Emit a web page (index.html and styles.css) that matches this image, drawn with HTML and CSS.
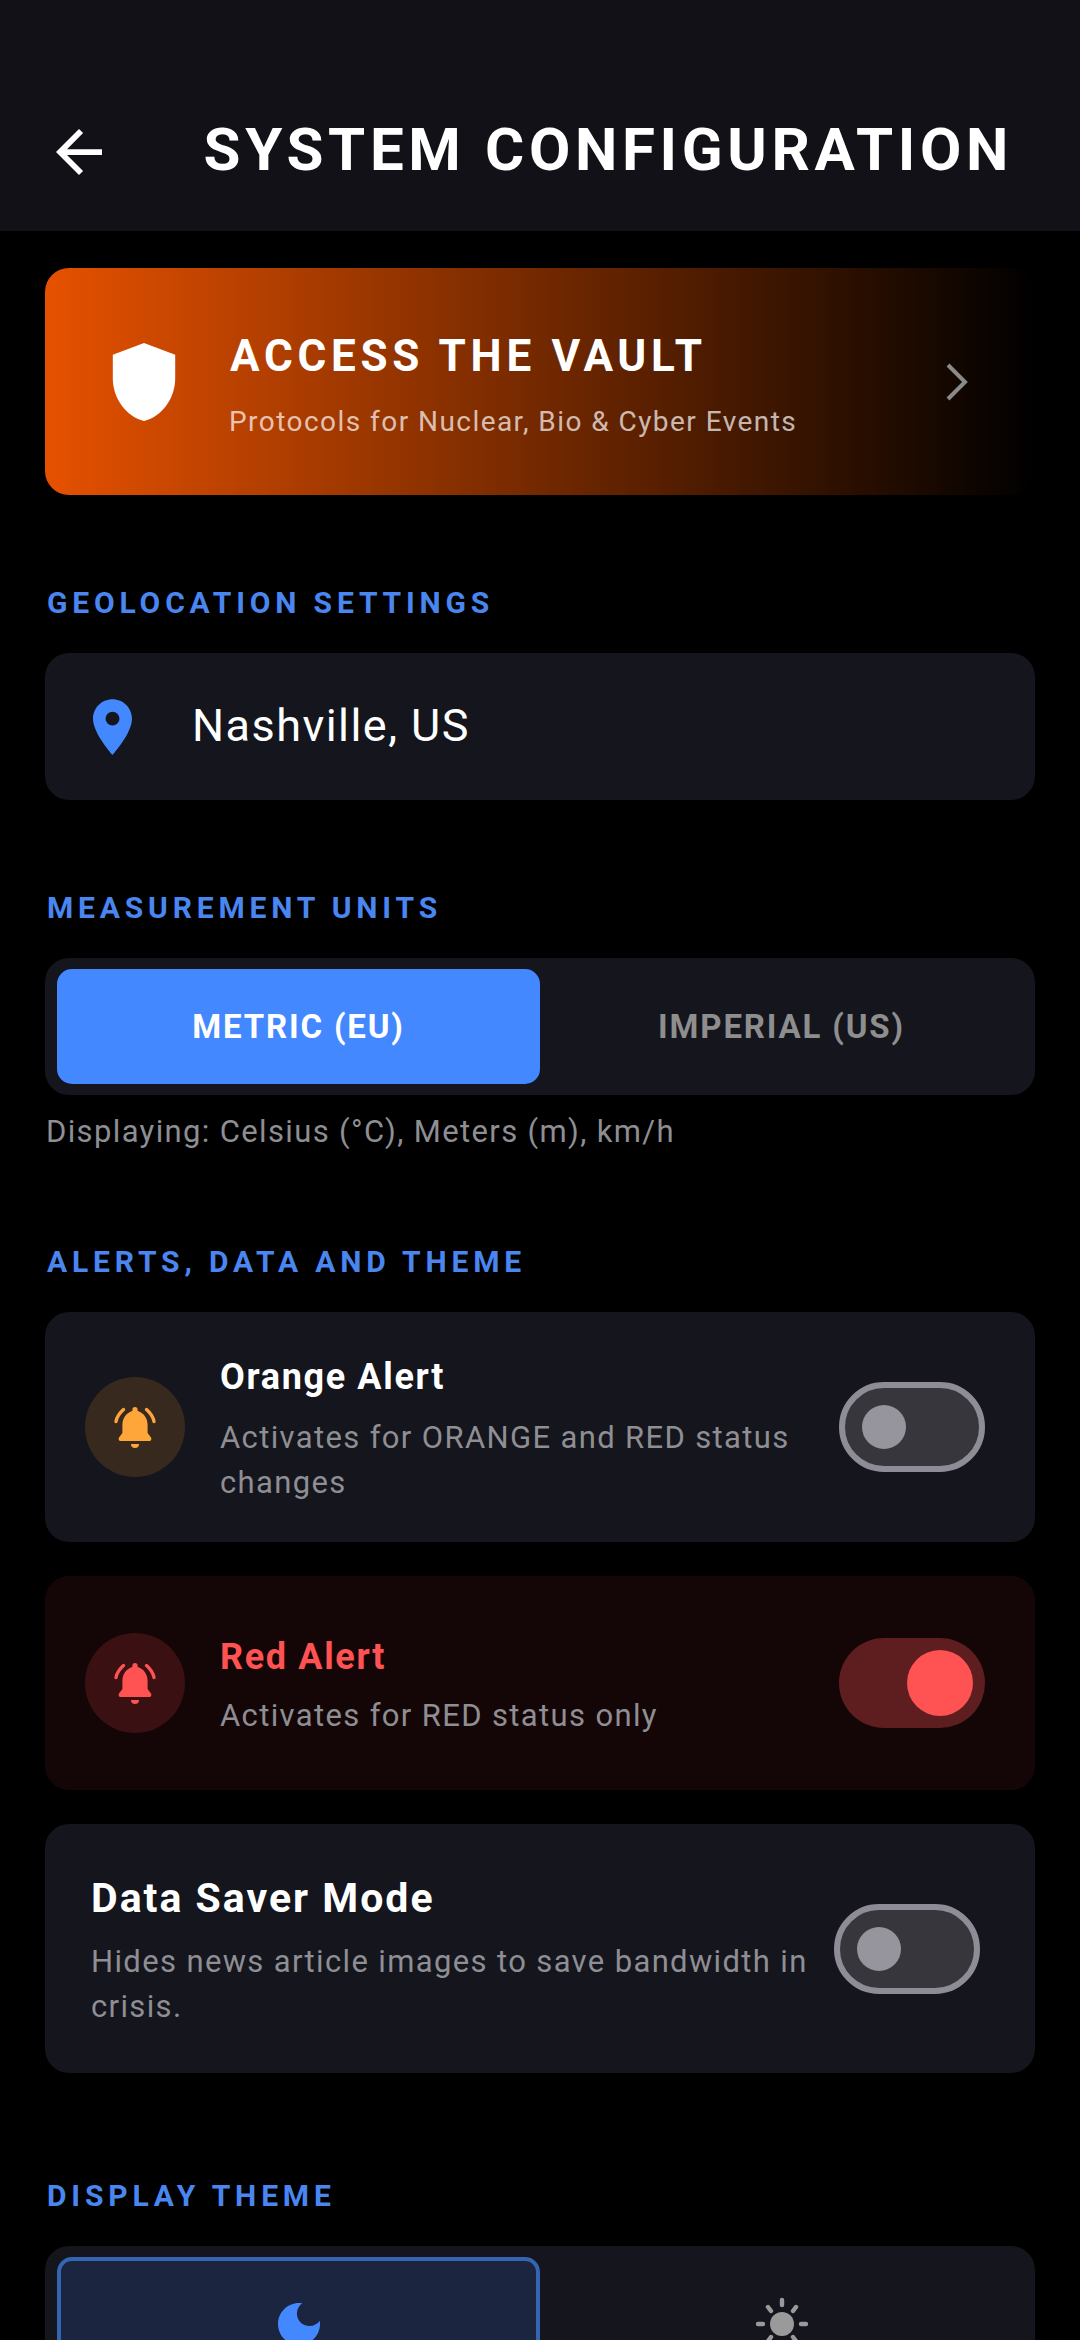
FILE: index.html
```html
<!DOCTYPE html>
<html lang="en">
<head>
  <meta charset="UTF-8">
  <title>System Configuration</title>
  <link rel="stylesheet" href="styles.css">
</head>
<body>

<header class="top-bar">
  <svg class="back-icon" viewBox="4 4 16 16"><path d="M20 11H7.83l5.59-5.59L12 4l-8 8 8 8 1.41-1.41L7.83 13H20v-2z"/></svg>
  <h1>SYSTEM CONFIGURATION</h1>
</header>

<main class="content">

  <a class="vault">
    <svg class="shield-icon" viewBox="4 2 16 20"><path d="M12 2 4 5v6.09c0 5.05 3.41 9.76 8 10.91 4.59-1.15 8-5.86 8-10.91V5l-8-3z"/></svg>
    <div class="vault-text">
      <div class="vault-title">ACCESS THE VAULT</div>
      <div class="vault-sub">Protocols for Nuclear, Bio &amp; Cyber Events</div>
    </div>
    <svg class="chevron-icon" viewBox="0 0 22 38"><path d="M2 2l17 17L2 36"/></svg>
  </a>

  <section class="section">
    <h2>GEOLOCATION SETTINGS</h2>
    <div class="card location">
      <svg class="pin-icon" viewBox="5 2 14 20"><path d="M12 2C8.13 2 5 5.13 5 9c0 5.25 7 13 7 13s7-7.75 7-13c0-3.87-3.13-7-7-7zm0 9.5a2.5 2.5 0 0 1 0-5 2.5 2.5 0 0 1 0 5z"/></svg>
      <span>Nashville, US</span>
    </div>
  </section>

  <section class="section">
    <h2>MEASUREMENT UNITS</h2>
    <div class="segment">
      <div class="seg-btn active">METRIC (EU)</div>
      <div class="seg-btn">IMPERIAL (US)</div>
    </div>
    <p class="helper">Displaying: Celsius (°C), Meters (m), km/h</p>
  </section>

  <section class="section section-alerts">
    <h2>ALERTS, DATA AND THEME</h2>

    <div class="card row row-orange">
      <div class="bell-wrap">
        <svg class="bell-icon" viewBox="0 0 42 43"><use href="#bell"/></svg>
      </div>
      <div class="row-text">
        <div class="row-title">Orange Alert</div>
        <div class="row-desc">Activates for ORANGE and RED status changes</div>
      </div>
      <div class="toggle"><span class="knob"></span></div>
    </div>

    <div class="card row row-red">
      <div class="bell-wrap">
        <svg class="bell-icon" viewBox="0 0 42 43"><use href="#bell"/></svg>
      </div>
      <div class="row-text">
        <div class="row-title">Red Alert</div>
        <div class="row-desc">Activates for RED status only</div>
      </div>
      <div class="toggle on"><span class="knob"></span></div>
    </div>

    <div class="card row row-saver">
      <div class="row-text">
        <div class="row-title">Data Saver Mode</div>
        <div class="row-desc">Hides news article images to save bandwidth in crisis.</div>
      </div>
      <div class="toggle"><span class="knob"></span></div>
    </div>
  </section>

  <section class="section section-theme">
    <h2>DISPLAY THEME</h2>
    <div class="segment theme">
      <div class="theme-btn active">
        <svg class="theme-icon" viewBox="0 0 24 24"><path d="M12 3c-4.97 0-9 4.03-9 9s4.03 9 9 9 9-4.03 9-9c0-.46-.04-.92-.1-1.36-.98 1.37-2.58 2.26-4.4 2.26-2.98 0-5.4-2.42-5.4-5.4 0-1.81.89-3.42 2.26-4.4-.44-.06-.9-.1-1.36-.1z"/></svg>
      </div>
      <div class="theme-btn">
        <svg class="theme-icon sun" viewBox="0 0 56 56">
          <circle cx="28" cy="28" r="12"/>
          <path d="M28 4v5M28 47v5M4 28h5M47 28h5M39 15l3-4M17 15l-3-4M39 41l3 4M17 41l-3 4"/>
        </svg>
      </div>
    </div>
  </section>

</main>

<!-- shared bell shape -->
<svg class="defs" width="0" height="0">
  <symbol id="bell" viewBox="0 0 42 43">
    <path d="M21 1a2.6 2.6 0 0 1 2.6 2.6V5c5.9 1.6 10 7 10 14v8l3.4 4.4c.9 1.3.2 3.6-1.5 3.6h-29c-1.7 0-2.4-2.3-1.5-3.6L8.4 27v-8c0-7 4.1-12.4 10-14V3.6A2.6 2.6 0 0 1 21 1z"/>
    <path d="M17 38h8a4 4 0 0 1-8 0z"/>
    <path class="bell-arc" d="M9.5 3.5C5.5 7 2.8 11 2 15.5M32.5 3.5c4 3.5 6.7 7.5 7.5 12"/>
  </symbol>
</svg>

</body>
</html>
```

FILE: styles.css
```css
html, body {
  margin: 0;
  height: 2340px;
  overflow: hidden;
  background-color: #000;
}
body {
  font-family: Roboto, "Noto Sans", sans-serif;
  color: #fff;
}
h1, h2, p {
  margin: 0;
}
svg {
  display: block;
  flex: none;
}
.defs {
  position: absolute;
}

.top-bar {
  height: 231px;
  box-sizing: border-box;
  padding: 0 67px 46px 56px;
  background-color: #111117;
  display: flex;
  align-items: flex-end;
  justify-content: space-between;
}
.top-bar h1 {
  font-size: 60px;
  line-height: 70px;
  font-weight: 700;
  letter-spacing: 4.65px;
  white-space: nowrap;
}
.back-icon {
  width: 46px;
  height: 46px;
  fill: #fff;
  margin-bottom: 10px;
}

.content {
  padding: 37px 45px 0;
}

.vault {
  height: 227px;
  box-sizing: border-box;
  border-radius: 24px;
  background: linear-gradient(90deg, #e65100, #000);
  display: flex;
  align-items: center;
  padding: 0 67px;
}
.shield-icon {
  width: 64px;
  height: 78px;
  fill: #fff;
  margin-right: 54px;
}
.vault-text {
  flex: 1;
  padding-top: 6px;
}
.vault-title {
  font-size: 44px;
  line-height: 52px;
  font-weight: 700;
  letter-spacing: 4.73px;
}
.vault-sub {
  margin: 22px 0 0 -1px;
  font-size: 28px;
  line-height: 36px;
  letter-spacing: 1.45px;
  color: rgba(255, 255, 255, .7);
}
.chevron-icon {
  width: 22px;
  height: 38px;
  fill: none;
  stroke: #8a8a8a;
  stroke-width: 4;
}

.section {
  margin-top: 90px;
}
.section h2 {
  font-size: 30px;
  line-height: 36px;
  font-weight: 700;
  letter-spacing: 4.83px;
  color: #4a86f0;
  margin: 0 0 32px 2px;
}

.card {
  background-color: #14151d;
  border-radius: 24px;
}
.location {
  height: 147px;
  display: flex;
  align-items: center;
  padding-left: 48px;
  font-size: 45px;
  letter-spacing: 1.45px;
}
.location span {
  margin-top: -2px;
}
.pin-icon {
  width: 39px;
  height: 56px;
  fill: #4488ff;
  margin-right: 60px;
}

.segment {
  background-color: #14151d;
  border-radius: 24px;
  display: flex;
  padding: 11px 12px;
}
.seg-btn {
  flex: 1;
  height: 115px;
  border-radius: 15px;
  display: flex;
  align-items: center;
  justify-content: center;
  font-size: 33px;
  font-weight: 700;
  letter-spacing: 1.85px;
  color: #8e8e8e;
}
.seg-btn.active {
  background-color: #4488ff;
  color: #fff;
}
.helper {
  margin: 17px 0 0 1px;
  font-size: 31px;
  line-height: 40px;
  letter-spacing: 1.36px;
  color: #8e8e93;
}

.section-alerts {
  margin-top: 92px;
}
.row {
  display: flex;
  align-items: center;
  box-sizing: border-box;
  padding: 6px 50px 0 40px;
}
.row + .row {
  margin-top: 34px;
}
.row-orange {
  height: 230px;
  --accent: #ffa63a;
}
.row-orange .row-desc {
  margin-top: 16px;
}
.row-orange .bell-wrap, .row-orange .toggle,
.row-red .bell-wrap, .row-red .toggle {
  margin-top: -6px;
}
.row-red {
  height: 214px;
  background-color: #140607;
  --accent: #ff5252;
}
.row-saver {
  height: 249px;
  padding: 4px 55px 0 46px;
}
.row-saver .toggle {
  margin: -4px 0 0 20px;
}
.bell-wrap {
  width: 100px;
  height: 100px;
  border-radius: 50%;
  background-color: #38291f;
  display: flex;
  align-items: center;
  justify-content: center;
  margin-right: 35px;
  flex: none;
}
.row-red .bell-wrap {
  background-color: #3a1012;
}
.bell-icon {
  width: 42px;
  height: 43px;
  fill: var(--accent);
}
.bell-arc {
  fill: none;
  stroke: var(--accent);
  stroke-width: 3.4;
  stroke-linecap: round;
}
.row-text {
  flex: 1;
}
.row-title {
  font-size: 36px;
  line-height: 44px;
  font-weight: 700;
  letter-spacing: 1.65px;
}
.row-red .row-title {
  color: #ff5252;
}
.row-saver .row-title {
  font-size: 41px;
  line-height: 50px;
  letter-spacing: 2px;
}
.row-desc {
  margin-top: 14px;
  font-size: 31px;
  line-height: 45px;
  letter-spacing: 1.36px;
  color: #8e8e93;
}
.row-saver .row-desc {
  margin-top: 16px;
}

.toggle {
  width: 146px;
  height: 90px;
  box-sizing: border-box;
  border: 6px solid #8e8c96;
  border-radius: 45px;
  background-color: #36363c;
  display: flex;
  align-items: center;
  padding-left: 17px;
  margin-left: 30px;
  flex: none;
}
.knob {
  width: 44px;
  height: 44px;
  border-radius: 50%;
  background-color: #96949c;
}
.toggle.on {
  border: none;
  background-color: #5e1e20;
  justify-content: flex-end;
  padding: 0 12px 0 0;
}
.toggle.on .knob {
  width: 66px;
  height: 66px;
  background-color: #ff5252;
}

.section-theme {
  margin-top: 105px;
}
.theme-btn {
  flex: 0 0 50%;
  height: 130px;
  border-radius: 15px;
  box-sizing: border-box;
  display: flex;
  justify-content: center;
  padding-top: 39px;
}
.theme-btn.active {
  background-color: #1b2540;
  border: 4px solid #3565b0;
  padding-top: 35px;
}
.theme-icon {
  width: 56px;
  height: 56px;
  fill: #4488ff;
}
.theme-icon.sun {
  fill: #9a9a9a;
}
.sun path {
  fill: none;
  stroke: #9a9a9a;
  stroke-width: 4.4;
  stroke-linecap: round;
}
```
